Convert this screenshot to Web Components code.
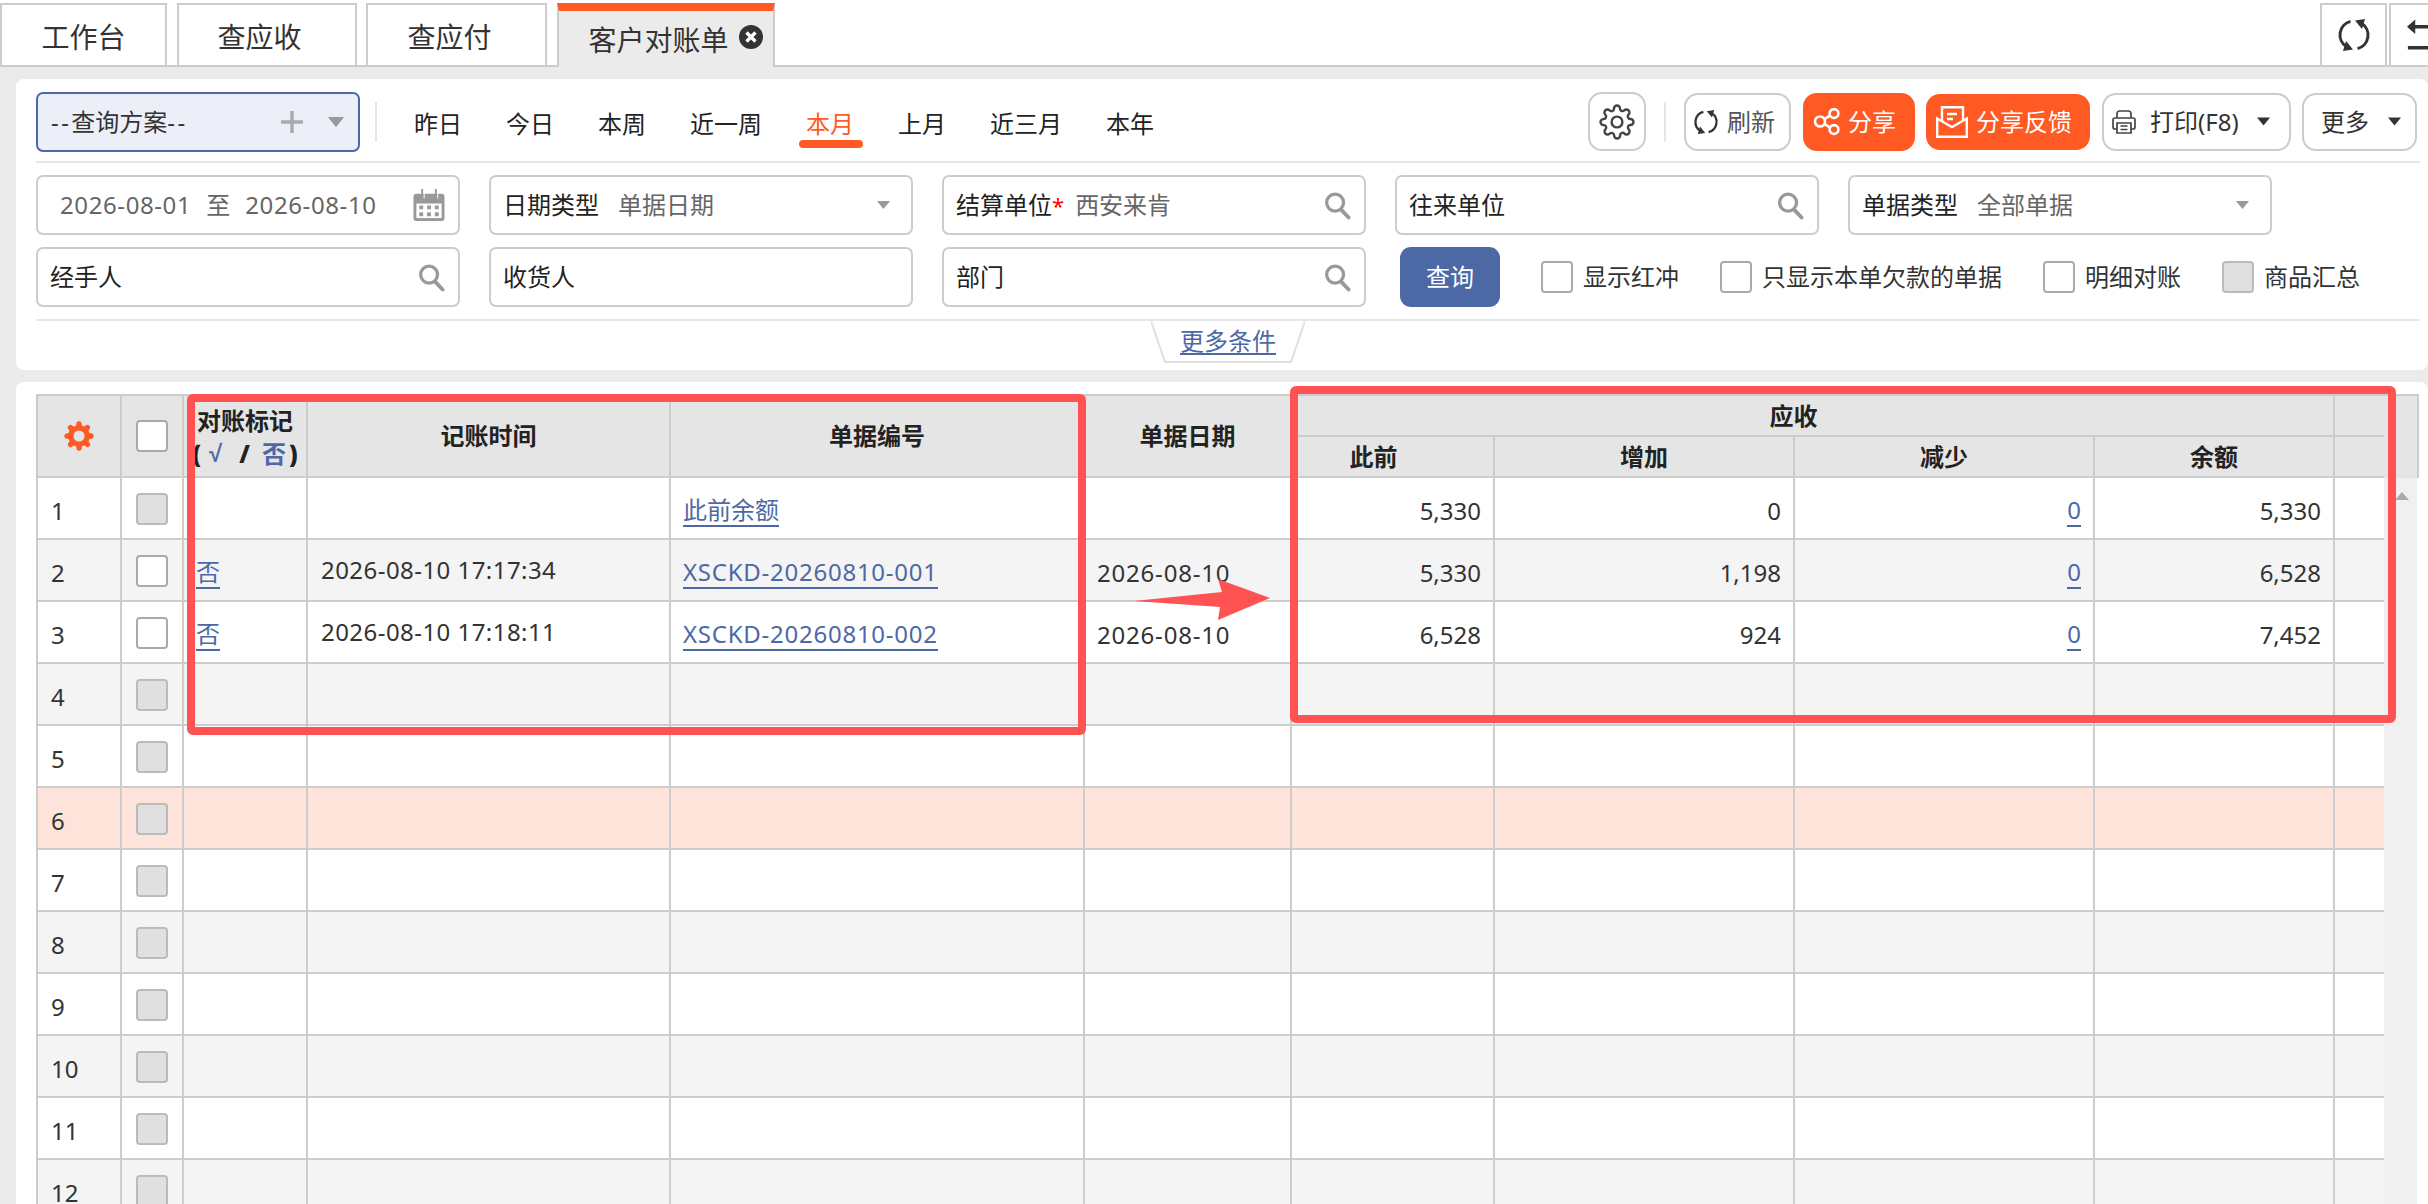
<!DOCTYPE html>
<html lang="zh-CN">
<head>
<meta charset="utf-8">
<title>客户对账单</title>
<style>
  html, body {
    margin: 0;
    height: 1204px;
    overflow: hidden;
    background: #ebebeb;
    color: #333;
    font: 24px/30px "Noto Sans", "Noto Sans CJK SC", sans-serif;
  }
  body { position: relative; }
</style>
</head>
<body>
<tab-bar>
  <tab-item style="--w:167px">工作台</tab-item>
  <tab-item style="--w:180px" shift>查应收</tab-item>
  <tab-item style="--w:181px" shift>查应付</tab-item>
  <tab-item style="--w:218px" active>客户对账单</tab-item>
  <tab-tool slot="tools" style="--w:67px"><app-icon name="refresh" style="--s:32px"></app-icon></tab-tool>
  <tab-tool slot="tools" style="--w:39px" cut></tab-tool>
</tab-bar>

<query-panel>
  <scheme-select slot="scheme"><span style="letter-spacing:2.4px">--</span>查询方案<span style="letter-spacing:2.4px">--</span></scheme-select>
  <quick-date slot="dates">昨日</quick-date>
  <quick-date slot="dates">今日</quick-date>
  <quick-date slot="dates">本周</quick-date>
  <quick-date slot="dates">近一周</quick-date>
  <quick-date slot="dates" active>本月</quick-date>
  <quick-date slot="dates">上月</quick-date>
  <quick-date slot="dates">近三月</quick-date>
  <quick-date slot="dates">本年</quick-date>

  <tool-button slot="tools" style="--w:58px;--h:59px;--pl:9px"><app-icon name="gear" style="--s:36px"></app-icon></tool-button>
  <tool-sep slot="tools"></tool-sep>
  <tool-button slot="tools" style="--w:107px;--pl:8px;--gap:9px;--c:#555"><app-icon name="refresh" style="--s:24px;--c:#333"></app-icon>刷新</tool-button>
  <tool-button slot="tools" primary style="--w:112px;--pl:8px;--gap:8px;margin-left:12px"><app-icon name="share" style="--s:27px"></app-icon>分享</tool-button>
  <tool-button slot="tools" primary style="--w:164px;--h:56px;--pl:8px;--gap:8px;margin-left:11px"><app-icon name="mail" style="--s:32px"></app-icon>分享反馈</tool-button>
  <tool-button slot="tools" style="--w:189px;--pl:8px;--gap:14px;margin-left:12px"><app-icon name="printer" style="--s:24px"></app-icon>打印(F8)<app-icon name="caret" style="--s:13px;--c:#333;margin-left:4px"></app-icon></tool-button>
  <tool-button slot="tools" style="--w:115px;--pl:17px;--gap:19px;margin-left:11px">更多<app-icon name="caret" style="--s:13px;--c:#333"></app-icon></tool-button>

  <query-field slot="row2" icon="calendar" inset><date-range from="2026-08-01" to="2026-08-10"></date-range></query-field>
  <query-field slot="row2" label="日期类型" icon="caret">单据日期</query-field>
  <query-field slot="row2" label="结算单位" icon="search" required>西安来肯</query-field>
  <query-field slot="row2" label="往来单位" icon="search"></query-field>
  <query-field slot="row2" label="单据类型" icon="caret">全部单据</query-field>

  <query-field slot="row3" label="经手人" icon="search"></query-field>
  <query-field slot="row3" label="收货人"></query-field>
  <query-field slot="row3" label="部门" icon="search"></query-field>
  <query-actions slot="row3">
    <query-button>查询</query-button>
    <check-box>显示红冲</check-box>
    <check-box>只显示本单欠款的单据</check-box>
    <check-box>明细对账</check-box>
    <check-box off>商品汇总</check-box>
  </query-actions>
</query-panel>

<data-grid></data-grid>
<mark-layer></mark-layer>

<script>
const GEAR_PATH = "M19.4 15a1.65 1.65 0 0 0 .33 1.82l.06.06a2 2 0 0 1 0 2.83 2 2 0 0 1-2.83 0l-.06-.06a1.65 1.65 0 0 0-1.82-.33 1.65 1.65 0 0 0-1 1.51V21a2 2 0 0 1-2 2 2 2 0 0 1-2-2v-.09A1.65 1.65 0 0 0 9 19.4a1.65 1.65 0 0 0-1.82.33l-.06.06a2 2 0 0 1-2.83 0 2 2 0 0 1 0-2.83l.06-.06a1.65 1.65 0 0 0 .33-1.82 1.65 1.65 0 0 0-1.51-1H3a2 2 0 0 1-2-2 2 2 0 0 1 2-2h.09A1.65 1.65 0 0 0 4.6 9a1.65 1.65 0 0 0-.33-1.82l-.06-.06a2 2 0 0 1 0-2.83 2 2 0 0 1 2.83 0l.06.06a1.65 1.65 0 0 0 1.82.33H9a1.65 1.65 0 0 0 1-1.51V3a2 2 0 0 1 2-2 2 2 0 0 1 2 2v.09a1.65 1.65 0 0 0 1 1.51 1.65 1.65 0 0 0 1.82-.33l.06-.06a2 2 0 0 1 2.83 0 2 2 0 0 1 0 2.83l-.06.06a1.65 1.65 0 0 0-.33 1.82V9a1.65 1.65 0 0 0 1.51 1H21a2 2 0 0 1 2 2 2 2 0 0 1-2 2h-.09a1.65 1.65 0 0 0-1.51 1z";

const ICONS = {
  search: `<svg viewBox="0 0 27 28" fill="none" stroke="#999"><circle cx="11" cy="11" r="8.8" stroke-width="3.4"/><path d="M17.5 18.5 25 26.5" stroke-width="4" stroke-linecap="round"/></svg>`,
  caret: `<svg viewBox="0 0 13 8"><path d="M0 0H13L6.5 8Z" fill="var(--c,#999)"/></svg>`,
  calendar: `<svg viewBox="0 0 32 33"><rect y="5" width="32" height="28" rx="3" fill="#999"/><rect x="3" y="15" width="26" height="15" fill="#fff"/><path d="M9 0v10M23 0v10" stroke="#999" stroke-width="2"/><path d="M11 2v8M25 2v8" stroke="#fff" stroke-width="1"/><path d="M6 17h4v4H6zM14 17h4v4h-4zM22 17h4v4h-4zM6 24h4v4H6zM14 24h4v4h-4zM22 24h4v4h-4z" fill="#999"/></svg>`,
  close: `<svg viewBox="0 0 24 24"><circle cx="12" cy="12" r="12" fill="#333"/><path d="M7.5 7.5 16.5 16.5M16.5 7.5 7.5 16.5" stroke="#fff" stroke-width="3.4"/></svg>`,
  refresh: `<svg viewBox="0 0 32 32" fill="none" stroke="var(--c,#333)" stroke-width="3"><path d="M12.5 2.4A14 14 0 0 0 8.5 27.8"/><path d="M19.5 29.6A14 14 0 0 0 23.5 4.2"/><path d="M5 32 15 30.5 8 22ZM27 0 17 1.5 24 10Z" fill="var(--c,#333)" stroke="none"/></svg>`,
  gear: `<svg viewBox="0 0 24 24" fill="none" stroke="#444" stroke-width="1.6"><circle cx="12" cy="12" r="3.6"/><path d="${GEAR_PATH}"/></svg>`,
  gearfill: `<svg viewBox="0 0 24 24"><path fill="#ff5a24" d="${GEAR_PATH}"/><circle cx="12" cy="12" r="4.2" fill="#e5e5e5"/></svg>`,
  share: `<svg viewBox="0 0 27 27" fill="none" stroke="#fff" stroke-width="2.6"><circle cx="7" cy="13.5" r="5"/><circle cx="21" cy="5.5" r="4.4"/><circle cx="21" cy="21.5" r="4.4"/><path d="M11.3 11 17.2 7.6M11.3 16 17.2 19.4"/></svg>`,
  mail: `<svg viewBox="0 0 32 32" fill="none" stroke="#fff" stroke-width="2.4"><path d="M1.2 12.5V30.8H30.8V12.5L16 21 1.2 12.5Z"/><path d="M6 15V1.2H27V15"/><path d="M11 8H21M11 13H17"/></svg>`,
  printer: `<svg viewBox="0 0 24 24" fill="none" stroke="#444" stroke-width="1.7"><path d="M5 8V3.5A2.5 2.5 0 0 1 7.5 1H16.5A2.5 2.5 0 0 1 19 3.5V8"/><path d="M5 19H3A2 2 0 0 1 1 17V10A2 2 0 0 1 3 8H21A2 2 0 0 1 23 10V17A2 2 0 0 1 21 19H19"/><path d="M5 13H19V23H5Z"/><path d="M8.5 16H15.5M8.5 19.5H15.5"/></svg>`
};

// small svg glyphs, sized through --s
class AppIcon extends HTMLElement {
  constructor() {
    super();
    this.shadowDOM = this.attachShadow({ mode: "open" });
  }
  connectedCallback() {
    this.shadowDOM.innerHTML = `
    <style>
      :host { display: inline-flex; flex: none; width: var(--s, 27px); height: var(--s, 27px); }
      svg { width: 100%; height: 100%; display: block; overflow: visible; }
    </style>
    ${ICONS[this.getAttribute("name")]}`;
  }
}

class TabBar extends HTMLElement {
  constructor() {
    super();
    this.shadowDOM = this.attachShadow({ mode: "open" });
    this.shadowDOM.innerHTML = `
    <style>
      :host {
        display: flex;
        box-sizing: border-box;
        height: 67px;
        padding-top: 3px;
        background: #fff;
        border-bottom: 2px solid #ccc;
      }
      .tabs { display: flex; gap: 9.5px; flex: 1; }
      .tools { display: flex; gap: 2px; }
    </style>
    <div class="tabs"><slot></slot></div>
    <div class="tools"><slot name="tools"></slot></div>`;
  }
}

class TabItem extends HTMLElement {
  constructor() {
    super();
    this.shadowDOM = this.attachShadow({ mode: "open" });
  }
  connectedCallback() {
    const active = this.hasAttribute("active");
    this.shadowDOM.innerHTML = `
    <style>
      :host {
        display: flex;
        align-items: center;
        justify-content: center;
        box-sizing: border-box;
        width: var(--w);
        height: 62px;
        padding-top: 4px;
        padding-right: ${this.hasAttribute("shift") ? "14px" : "0"};
        background: #fff;
        border: 2px solid #ccc;
        border-bottom: 0;
        font-size: 28px;
        line-height: 36px;
        color: #333;
      }
      :host([active]) {
        height: 64px;
        justify-content: flex-start;
        padding: 2px 0 0 30px;
        gap: 10px;
        background: #ebebeb;
        border-top: 8px solid #ff5a24;
      }
      app-icon { --s: 24px; margin-top: -6px; }
    </style>
    <slot></slot>${active ? `<app-icon name="close"></app-icon>` : ""}`;
  }
}

class TabTool extends HTMLElement {
  constructor() {
    super();
    this.shadowDOM = this.attachShadow({ mode: "open" });
    this.shadowDOM.innerHTML = `
    <style>
      :host {
        display: flex;
        align-items: center;
        justify-content: center;
        box-sizing: border-box;
        width: var(--w);
        height: 62px;
        background: #fff;
        border: 2px solid #ccc;
        border-bottom: 0;
      }
      :host([cut]) { border-right: 0; justify-content: flex-start; padding-left: 16px; }
      svg { width: 23px; height: 34px; display: block; }
    </style>
    <slot></slot>`;
  }
  connectedCallback() {
    if (this.hasAttribute("cut")) {
      this.shadowDOM.innerHTML += `<svg viewBox="0 0 23 34"><path d="M0 8 9 0V6H23V10H9V16ZM1 29H23V33H1Z" fill="#333"/></svg>`;
    }
  }
}

class QueryPanel extends HTMLElement {
  constructor() {
    super();
    this.shadowDOM = this.attachShadow({ mode: "open" });
    this.shadowDOM.innerHTML = `
    <style>
      :host {
        display: block;
        box-sizing: border-box;
        height: 291px;
        margin: 12px 0 0 16px;
        padding: 12px 8px 0 20px;
        background: #fff;
        border-radius: 8px;
      }
      .top { display: flex; align-items: center; height: 61px; }
      .sep { width: 2px; height: 40px; margin: 0 37px 0 15px; background: #e6e6e6; }
      .dates { display: flex; gap: 44px; flex: 1; }
      .tools { display: flex; align-items: center; margin-right: 3px; }
      .line { height: 2px; background: #e6e6e6; }
      .line.a { margin: 9px 0 12px; }
      .line.b { margin-top: 12px; }
      .grid { display: grid; grid-template-columns: repeat(5, 424px); column-gap: 29px; }
      .grid.r3 { margin-top: 12px; }
      .more {
        width: 154px;
        height: 42px;
        margin: 0 auto;
        display: flex;
        justify-content: center;
        position: relative;
      }
      .more svg { position: absolute; inset: 0; width: 100%; height: 100%; }
      .more a {
        position: relative;
        align-self: flex-start;
        margin-top: 6px;
        line-height: 28px;
        color: #4d69a5;
        text-decoration: underline;
        text-underline-offset: 3px;
      }
    </style>
    <div class="top">
      <slot name="scheme"></slot>
      <div class="sep"></div>
      <div class="dates"><slot name="dates"></slot></div>
      <div class="tools"><slot name="tools"></slot></div>
    </div>
    <div class="line a"></div>
    <div class="grid"><slot name="row2"></slot></div>
    <div class="grid r3"><slot name="row3"></slot></div>
    <div class="line b"></div>
    <div class="more">
      <svg viewBox="0 0 154 42"><path d="M0 0 14 41H140L154 0" fill="#fff" stroke="#e0e0e0" stroke-width="2"/></svg>
      <a>更多条件</a>
    </div>`;
  }
}

class SchemeSelect extends HTMLElement {
  constructor() {
    super();
    this.shadowDOM = this.attachShadow({ mode: "open" });
    this.shadowDOM.innerHTML = `
    <style>
      :host {
        display: flex;
        align-items: center;
        box-sizing: border-box;
        width: 324px;
        height: 60px;
        padding: 0 13px 0 13px;
        background: #eceff7;
        border: 2px solid #4d69a5;
        border-radius: 7px;
        color: #333;
      }
      .text { flex: 1; }
      .plus { width: 22px; height: 22px; margin-right: 24px; }
      app-icon { --s: 18px; height: 10px; }
    </style>
    <span class="text"><slot></slot></span>
    <svg class="plus" viewBox="0 0 22 22"><path d="M11 0V22M0 11H22" stroke="#aaa" stroke-width="3.4"/></svg>
    <app-icon name="caret"></app-icon>`;
  }
}

class QuickDate extends HTMLElement {
  constructor() {
    super();
    this.shadowDOM = this.attachShadow({ mode: "open" });
    this.shadowDOM.innerHTML = `
    <style>
      :host { display: block; position: relative; line-height: 30px; color: #222; padding-top: 5px; }
      :host([active]) { color: #ff5a24; }
      :host([active])::after {
        content: "";
        position: absolute;
        left: -7px;
        right: -9px;
        top: 36px;
        height: 8px;
        border-radius: 4px;
        background: #ff5a24;
      }
    </style>
    <slot></slot>`;
  }
}

class ToolSep extends HTMLElement {
  constructor() {
    super();
    this.shadowDOM = this.attachShadow({ mode: "open" });
    this.shadowDOM.innerHTML = `
    <style>
      :host { display: block; width: 2px; height: 40px; margin: 0 18px; background: #e6e6e6; }
    </style>`;
  }
}

class ToolButton extends HTMLElement {
  constructor() {
    super();
    this.shadowDOM = this.attachShadow({ mode: "open" });
    this.shadowDOM.innerHTML = `
    <style>
      :host {
        display: flex;
        align-items: center;
        gap: var(--gap, 0);
        box-sizing: border-box;
        width: var(--w);
        height: var(--h, 58px);
        padding-left: var(--pl, 0);
        background: #fff;
        border: 2px solid #ccc;
        border-radius: 14px;
        color: var(--c, #333);
      }
      :host([primary]) { background: #ff5a24; border-color: #ff5a24; color: #fff; }
    </style>
    <slot></slot>`;
  }
}

class QueryField extends HTMLElement {
  constructor() {
    super();
    this.shadowDOM = this.attachShadow({ mode: "open" });
  }
  connectedCallback() {
    const label = this.getAttribute("label");
    const icon = this.getAttribute("icon");
    const size = { search: "27px", caret: "13px", calendar: "32px" }[icon];
    const star = this.hasAttribute("required") ? `<i>*</i>` : "";
    this.shadowDOM.innerHTML = `
    <style>
      :host {
        display: flex;
        align-items: center;
        box-sizing: border-box;
        height: 60px;
        padding: 0 ${icon === "caret" ? "21px" : "13px"} 0 ${this.hasAttribute("inset") ? "22px" : "12px"};
        background: #fff;
        border: 2px solid #ccc;
        border-radius: 7px;
      }
      .label { color: #222; margin-right: 19px; white-space: nowrap; }
      .label i { color: #f00; font-style: normal; margin-right: -8px; font-size: 22px; }
      .value { flex: 1; color: #666; white-space: nowrap; }
      app-icon { --s: ${size}; ${icon === "caret" ? "height: 8px;" : ""} }
    </style>
    ${label ? `<span class="label">${label}${star}</span>` : ""}
    <span class="value"><slot></slot></span>
    ${icon ? `<app-icon name="${icon}"></app-icon>` : ""}`;
  }
}

class DateRange extends HTMLElement {
  constructor() {
    super();
    this.shadowDOM = this.attachShadow({ mode: "open" });
  }
  connectedCallback() {
    this.shadowDOM.innerHTML = `
    <style>
      :host { display: inline-flex; gap: 15px; color: #666; }
      b { font-weight: 400; letter-spacing: .6px; }
    </style>
    <b>${this.getAttribute("from")}</b><span>至</span><b>${this.getAttribute("to")}</b>`;
  }
}

class QueryActions extends HTMLElement {
  constructor() {
    super();
    this.shadowDOM = this.attachShadow({ mode: "open" });
    this.shadowDOM.innerHTML = `
    <style>
      :host {
        grid-column: span 2;
        display: flex;
        align-items: center;
        gap: 41px;
        padding-left: 5px;
        white-space: nowrap;
      }
    </style>
    <slot></slot>`;
  }
}

class QueryButton extends HTMLElement {
  constructor() {
    super();
    this.shadowDOM = this.attachShadow({ mode: "open" });
    this.shadowDOM.innerHTML = `
    <style>
      :host {
        display: flex;
        flex: none;
        align-items: center;
        justify-content: center;
        width: 100px;
        height: 60px;
        background: #4d69a5;
        border-radius: 11px;
        color: #fff;
      }
    </style>
    <slot></slot>`;
  }
}

class CheckBox extends HTMLElement {
  constructor() {
    super();
    this.shadowDOM = this.attachShadow({ mode: "open" });
    this.shadowDOM.innerHTML = `
    <style>
      :host { display: inline-flex; flex: none; align-items: center; gap: 10px; color: #333; }
      .box {
        box-sizing: border-box;
        width: 32px;
        height: 32px;
        background: #fff;
        border: 2px solid #aaa;
        border-radius: 4px;
      }
      :host([off]) .box { background: #e0e0e0; border-color: #bbb; }
    </style>
    <span class="box"></span><slot></slot>`;
  }
}

const ROWS = [
  { mark: "", time: "", no: "此前余额", date: "", vals: ["5,330", "0", "0", "5,330"] },
  { mark: "否", time: "2026-08-10 17:17:34", no: "XSCKD-20260810-001", date: "2026-08-10", vals: ["5,330", "1,198", "0", "6,528"], on: true },
  { mark: "否", time: "2026-08-10 17:18:11", no: "XSCKD-20260810-002", date: "2026-08-10", vals: ["6,528", "924", "0", "7,452"], on: true }
];

class DataGrid extends HTMLElement {
  constructor() {
    super();
    this.shadowDOM = this.attachShadow({ mode: "open" });
  }

  connectedCallback() {
    this.render();
  }

  rowHtml(i) {
    const r = ROWS[i] || { mark: "", time: "", no: "", date: "", vals: ["", "", "", ""] };
    const cls = i === 5 ? "row hot" : i % 2 ? "row alt" : "row";
    const link = (v) => (v ? `<a>${v}</a>` : "");
    const code = r.no.startsWith("X") ? `<a class="code">${r.no}</a>` : link(r.no);
    return `
    <div class="${cls}">
      <div class="c">${i + 1}</div>
      <div class="c mid"><check-box ${r.on ? "" : "off"}></check-box></div>
      <div class="c">${link(r.mark)}</div>
      <div class="c time">${r.time}</div>
      <div class="c">${code}</div>
      <div class="c stamp">${r.date}</div>
      <div class="c num">${r.vals[0]}</div>
      <div class="c num">${r.vals[1]}</div>
      <div class="c num">${i < 3 ? link(r.vals[2]) : ""}</div>
      <div class="c num">${r.vals[3]}</div>
      <div class="c"></div>
    </div>`;
  }

  render() {
    let rows = "";
    for (let i = 0; i < 12; i++) rows += this.rowHtml(i);
    this.shadowDOM.innerHTML = `
    <style>
      :host {
        display: block;
        box-sizing: border-box;
        height: 822px;
        margin: 12px 0 0 16px;
        padding: 12px 0 0 20px;
        background: #fff;
        border-radius: 8px 8px 0 0;
        overflow: hidden;
        color: #333;
        --cols: 84px 62px 124px 363px 414px 207px 203px 300px 300px 240px 49px;
      }
      .wrap { width: 2383px; border-left: 2px solid #ccc; box-sizing: border-box; }
      .head {
        display: grid;
        grid-template-columns: var(--cols) 33px;
        grid-template-rows: 41px 41px;
        border-top: 2px solid #ccc;
        background: #e5e5e5;
        font-weight: 700;
        color: #222;
        border-right: 2px solid #ccc;
      }
      .head > div {
        display: flex;
        align-items: center;
        justify-content: center;
        box-sizing: border-box;
        border-right: 2px solid #ccc;
        border-bottom: 2px solid #ccc;
      }
      .s2 { grid-row: span 2; }
      .group { grid-column: span 4; padding-right: 38px; }
      .before { padding-right: 38px; }
      .head .tail { grid-column: 11; border-right: 0; }
      .head .sb { border-right: 0; grid-column: 12; grid-row: 1 / span 2; border-bottom: 0; }
      .mark { flex-direction: column; line-height: 33px; padding-top: 2px; }
      .mark span { display: block; white-space: nowrap; }
      .sign { display: flex !important; align-items: center; }
      .sign em { font-style: normal; color: #4d69a5; }
      .sign .root { font-family: "Liberation Sans", sans-serif; margin-left: 8px; }
      .sign .slash { margin-left: 17px; }
      .sign .no { margin-left: 12px; }
      .sign .end { margin-left: 3px; }
      .body { display: flex; }
      .rows { width: 2346px; flex: none; }
      .row {
        display: grid;
        grid-template-columns: var(--cols);
        height: 62px;
        background: #fff;
      }
      .row.alt { background: #f4f4f4; }
      .row.hot { background: #fde3da; }
      .c {
        box-sizing: border-box;
        display: flex;
        align-items: center;
        padding: 5px 12px 0 13px;
        border-right: 2px solid #ccc;
        border-bottom: 2px solid #ccc;
        white-space: nowrap;
      }
      .c.mid { padding: 2px 0 0 14px; }
      .c.time { padding-top: 0; letter-spacing: .45px; color: #333; }
      .c.stamp { letter-spacing: .8px; padding-left: 12px; }
      .c.num { justify-content: flex-end; }
      .row .c:nth-child(3) { padding-left: 12px; }
      .row .c:nth-child(5) { padding-left: 12px; }
      .row .c:last-child { border-right: 0; }
      a { display: inline-block; color: #4d69a5; border-bottom: 2px solid #4d69a5; line-height: 30px; }
      a.code { letter-spacing: .75px; }
      .bar { width: 33px; flex: none; background: #f0f0f0; padding-top: 14px; box-sizing: border-box; height: 744px; }
      .bar i {
        display: block;
        width: 0;
        height: 0;
        margin-left: 11px;
        border: 7px solid transparent;
        border-top: 0;
        border-bottom: 8px solid #aaa;
      }
    </style>
    <div class="wrap">
      <div class="head">
        <div class="s2"><app-icon name="gearfill" style="--s:32px"></app-icon></div>
        <div class="s2"><check-box></check-box></div>
        <div class="s2 mark"><span>对账标记</span><span class="sign"><b>(</b><em class="root">√</em><b class="slash">/</b><em class="no">否</em><b class="end">)</b></span></div>
        <div class="s2">记账时间</div>
        <div class="s2">单据编号</div>
        <div class="s2">单据日期</div>
        <div class="group">应收</div>
        <div class="tail" style="grid-row:1"></div>
        <div class="before">此前</div>
        <div>增加</div>
        <div>减少</div>
        <div>余额</div>
        <div class="tail" style="grid-row:2"></div>
        <div class="sb"></div>
      </div>
      <div class="body">
        <div class="rows">${rows}</div>
        <div class="bar"><i></i></div>
      </div>
    </div>`;
  }
}

// hand drawn review marks over the grid
class MarkLayer extends HTMLElement {
  constructor() {
    super();
    this.shadowDOM = this.attachShadow({ mode: "open" });
    this.shadowDOM.innerHTML = `
    <style>
      :host { position: absolute; left: 0; top: 0; width: 2428px; height: 1204px; pointer-events: none; }
      svg { display: block; width: 100%; height: 100%; }
    </style>
    <svg viewBox="0 0 2428 1204" fill="none" stroke="#ff5252" stroke-width="8">
      <rect x="191" y="398" width="891" height="333" rx="2"/>
      <rect x="1294" y="390" width="1098" height="329" rx="2"/>
      <path d="M1134 601 1222 592 1218 579 1270 598 1218 620 1220 607Z" fill="#ff5252" stroke="none"/>
    </svg>`;
  }
}

customElements.define("app-icon", AppIcon);
customElements.define("tab-bar", TabBar);
customElements.define("tab-item", TabItem);
customElements.define("tab-tool", TabTool);
customElements.define("query-panel", QueryPanel);
customElements.define("scheme-select", SchemeSelect);
customElements.define("quick-date", QuickDate);
customElements.define("tool-sep", ToolSep);
customElements.define("tool-button", ToolButton);
customElements.define("query-field", QueryField);
customElements.define("date-range", DateRange);
customElements.define("query-actions", QueryActions);
customElements.define("query-button", QueryButton);
customElements.define("check-box", CheckBox);
customElements.define("data-grid", DataGrid);
customElements.define("mark-layer", MarkLayer);
</script>
</body>
</html>
